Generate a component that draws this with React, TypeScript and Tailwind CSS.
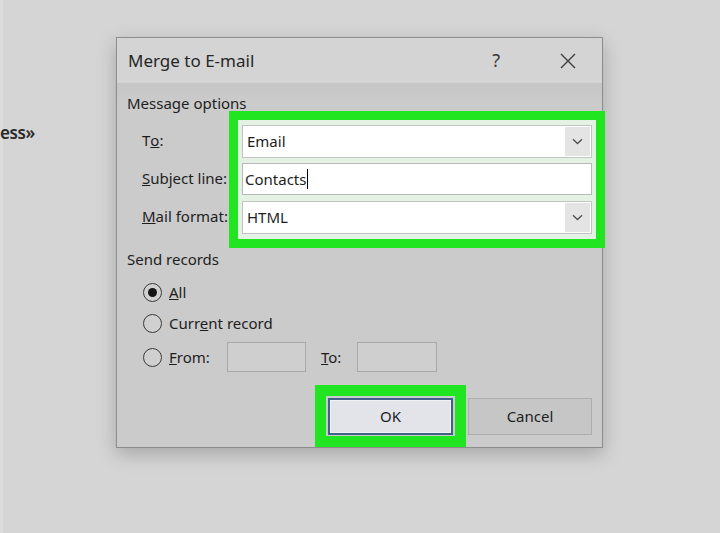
import React from "react";

const font = { fontFamily: '"Noto Sans", "Open Sans", Arial, sans-serif' };

function Chevron() {
  return (
    <svg width="11" height="7" viewBox="0 0 11 7" fill="none">
      <path d="M1 1.2 L5.5 5.5 L10 1.2" stroke="#505050" strokeWidth="1.3" />
    </svg>
  );
}

function Radio({ checked }: { checked?: boolean }) {
  return (
    <span className="flex h-[19px] w-[19px] shrink-0 items-center justify-center rounded-full border-[1.5px] border-[#3a3a3a] bg-[#d0d0d0]">
      {checked && <span className="h-[9px] w-[9px] rounded-full bg-[#141414]" />}
    </span>
  );
}

export default function App() {
  return (
    <div
      className="relative h-[533px] w-[720px] overflow-hidden bg-[#d5d5d5] text-[#1e1e1e]"
      style={font}
    >
      <div className="h-full border-l-[3px] border-[#dcdcdc] pt-[122px]">
        <div className="-ml-[3px] flex h-[22px] items-center text-[17px] font-semibold tracking-tight text-[#2a2a2a]">
          ess»
        </div>
      </div>

      {/* Dialog window */}
      <div className="absolute left-[116px] top-[37px] flex h-[411px] w-[487px] flex-col border border-[#8d8d8d] bg-[#cbcbcb] shadow-[0_6px_18px_rgba(0,0,0,0.22)]">
        <div className="flex h-[45px] shrink-0 items-center bg-[#d4d4d4] pl-[11px]">
          <span className="text-[17px] text-[#262626]">Merge to E-mail</span>
          <span className="ml-auto mr-[59px] text-[18px] text-[#3a3a3a]">?</span>
          <svg width="18" height="18" viewBox="0 0 18 18" className="mr-[25px]">
            <path d="M2 2 L16 16 M16 2 L2 16" stroke="#3c3c3c" strokeWidth="1.4" />
          </svg>
        </div>

        <div className="flex flex-1 flex-col bg-gradient-to-b from-[#c6c6c6] to-[#cbcbcb] to-[20px] pl-[10px]">
          <div className="pt-[11px] text-[15px] leading-[18px]">Message options</div>

          <div className="-mt-px flex">
            <div className="flex w-[102px] shrink-0 flex-col gap-[5px] pl-[15px] pt-[13px] text-[15px]">
              <div className="flex h-[33px] items-center">
                T<span className="underline">o</span>:
              </div>
              <div className="flex h-[33px] items-center">
                <span className="underline">S</span>ubject line:
              </div>
              <div className="flex h-[33px] items-center">
                <span className="underline">M</span>ail format:
              </div>
            </div>

            <div className="w-[376px] shrink-0 border-[9px] border-[#22e522] bg-[#e4f2e4] px-[4px] py-[5px]">
              <div className="flex flex-col text-[15px]">
                <div className="flex h-[33px] border border-[#c3c3c3] bg-white">
                  <div className="flex flex-1 items-center pl-[4px]">Email</div>
                  <div className="m-px flex w-[25px] items-center justify-center bg-[#e4e4e4]">
                    <Chevron />
                  </div>
                </div>
                <div className="mt-[5px] flex h-[32px] items-center border border-[#b9b9b9] bg-white pl-[2px]">
                  Contacts<span className="ml-px h-[20px] w-px bg-black" />
                </div>
                <div className="mt-[6px] flex h-[33px] border border-[#c3c3c3] bg-white">
                  <div className="flex flex-1 items-center pl-[4px]">HTML</div>
                  <div className="m-px flex w-[25px] items-center justify-center bg-[#e4e4e4]">
                    <Chevron />
                  </div>
                </div>
              </div>
            </div>
          </div>

          <div className="pt-[2px] text-[15px] leading-[18px]">Send records</div>

          <div className="mt-[12px] flex flex-col gap-[7px] pl-[16px] text-[15px]">
            <div className="flex h-[24px] items-center gap-[7px]">
              <Radio checked />
              <span>
                <span className="underline">A</span>ll
              </span>
            </div>
            <div className="flex h-[24px] items-center gap-[7px]">
              <Radio />
              <span>
                Curr<span className="underline">e</span>nt record
              </span>
            </div>
            <div className="flex h-[30px] items-center gap-[7px]">
              <Radio />
              <span className="w-[51px]">
                <span className="underline">F</span>rom:
              </span>
              <div className="h-[30px] w-[79px] border border-[#a9a9a9] bg-[#cfcfcf]" />
              <span className="ml-[8px] w-[29px]">
                <span className="underline">T</span>o:
              </span>
              <div className="h-[30px] w-[80px] border border-[#a9a9a9] bg-[#cfcfcf]" />
            </div>
          </div>

          <div className="mt-[26px] flex justify-end gap-[15px] pr-[10px] text-[15px]">
            <div className="relative">
              <div className="pointer-events-none absolute -inset-x-[13px] -top-[13px] -bottom-[12px] border-[11px] border-[#22e522]" />
              <div className="flex h-[37px] w-[125px] items-center justify-center border-2 border-[#3f6288] bg-[#e2e4ea] shadow-[inset_0_0_0_1px_#f2f2f2]">
                OK
              </div>
            </div>
            <div className="flex h-[37px] w-[124px] items-center justify-center border border-[#adadad] bg-[#c6c6c6]">
              Cancel
            </div>
          </div>
        </div>
      </div>
    </div>
  );
}
